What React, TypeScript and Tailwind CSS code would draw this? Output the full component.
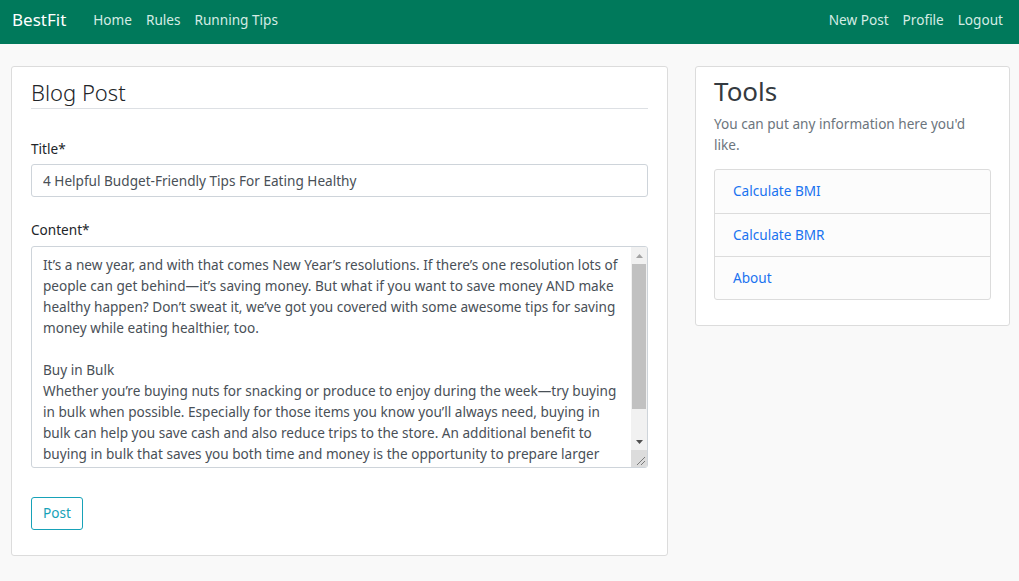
import { useState } from "react"

const content = `It’s a new year, and with that comes New Year’s resolutions. If there’s one resolution lots of people can get behind—it’s saving money. But what if you want to save money AND make healthy happen? Don’t sweat it, we’ve got you covered with some awesome tips for saving money while eating healthier, too.

Buy in Bulk
Whether you’re buying nuts for snacking or produce to enjoy during the week—try buying in bulk when possible. Especially for those items you know you’ll always need, buying in bulk can help you save cash and also reduce trips to the store. An additional benefit to buying in bulk that saves you both time and money is the opportunity to prepare larger meals ahead of time.

Plan Your Meals
Planning your meals for the week helps you avoid impulse buys at the store.`

// fake classic scrollbar + resize grip, like the windows textarea
function ScrollColumn() {
    return (
        <div className="w-[16px] flex flex-col bg-[#f1f1f1] shrink-0">
            <div className="h-[17px] flex items-center justify-center">
                <svg width="7" height="4" viewBox="0 0 7 4"><path d="M0 4 L3.5 0 L7 4 Z" fill="#a3a3a3" /></svg>
            </div>
            <div className="flex-1 px-[1px]">
                <div className="h-[145px] bg-[#c1c1c1]" />
            </div>
            <div className="h-[17px] flex items-center justify-center">
                <svg width="7" height="4" viewBox="0 0 7 4"><path d="M0 0 L3.5 4 L7 0 Z" fill="#505050" /></svg>
            </div>
            <div className="h-[17px] bg-[#dcdcdc] flex items-end justify-end p-[2px]">
                <svg width="9" height="9" viewBox="0 0 9 9">
                    <path d="M9 1 L1 9 M9 5 L5 9" stroke="#7a7a7a" strokeWidth="1" />
                </svg>
            </div>
        </div>
    )
}

export default function App() {
    const [title, setTitle] = useState("4 Helpful Budget-Friendly Tips For Eating Healthy")
    const [body, setBody] = useState(content)
    return (
        <div className="min-h-screen bg-[#f9f9f9] text-[13.6px] text-[#212529]" style={{ fontFamily: '"Noto Sans", "Open Sans", sans-serif' }}>
            <nav className="h-[44px] bg-[#00795b] flex items-center justify-between pl-[12px] pr-[16px] pb-[4px]">
                <div className="flex items-center">
                    <a className="text-white text-[17px] mr-[27px]">BestFit</a>
                    <div className="flex gap-[14px] text-[#d4ece4]">
                        <a>Home</a>
                        <a>Rules</a>
                        <a>Running Tips</a>
                    </div>
                </div>
                <div className="flex gap-[14px] text-[#d4ece4]">
                    <a>New Post</a>
                    <a>Profile</a>
                    <a>Logout</a>
                </div>
            </nav>
            <div className="flex items-start gap-[27px] pt-[22px] pl-[11px] pr-[9px]">
                <div className="w-[657px] bg-white border border-[#dcdcdc] rounded-[3px] px-[19px] pt-[10px] pb-[25px]">
                    <h2 className="text-[22px] font-light leading-[30px] pb-[1px] border-b border-[#dde0e4]">Blog Post</h2>
                    <div className="mt-[29px]">
                        <label className="block leading-[21px] mb-[5px]">Title*</label>
                        <input
                            value={title}
                            onChange={(e) => setTitle(e.target.value)}
                            className="w-full h-[33px] border border-[#ced4da] rounded-[3px] px-[11px] text-[#495057] outline-none"
                        />
                    </div>
                    <div className="mt-[22px]">
                        <label className="block leading-[21px] mb-[6px]">Content*</label>
                        <div className="flex h-[222px] border border-[#ced4da] rounded-[3px] overflow-hidden">
                            <textarea
                                value={body}
                                onChange={(e) => setBody(e.target.value)}
                                className="flex-1 h-full resize-none overflow-hidden pl-[11px] pr-[4px] pt-[7px] leading-[21px] text-[#495057] outline-none"
                            />
                            <ScrollColumn />
                        </div>
                    </div>
                    <button className="mt-[29px] h-[33px] px-[11px] border border-[#17a2b8] rounded-[3px] text-[#17a2b8] bg-white">Post</button>
                </div>
                <div className="w-[315px] bg-white border border-[#dcdcdc] rounded-[3px] px-[18px] pt-[7px] pb-[25px]">
                    <h3 className="text-[26px] leading-[34px] text-[#343a40]">Tools</h3>
                    <p className="mt-[5px] leading-[21px] text-[#6c757d]">You can put any information here you'd like.</p>
                    <div className="mt-[14px] border border-[#dcdcdc] rounded-[3px] bg-[#fcfcfc]">
                        {["Calculate BMI", "Calculate BMR", "About"].map((t, i) => (
                            <div key={t} className={"h-[43px] flex items-center px-[18px] text-[#1a73f0] " + (i > 0 ? "border-t border-[#dcdcdc]" : "")}>
                                {t}
                            </div>
                        ))}
                    </div>
                </div>
            </div>
        </div>
    )
}
